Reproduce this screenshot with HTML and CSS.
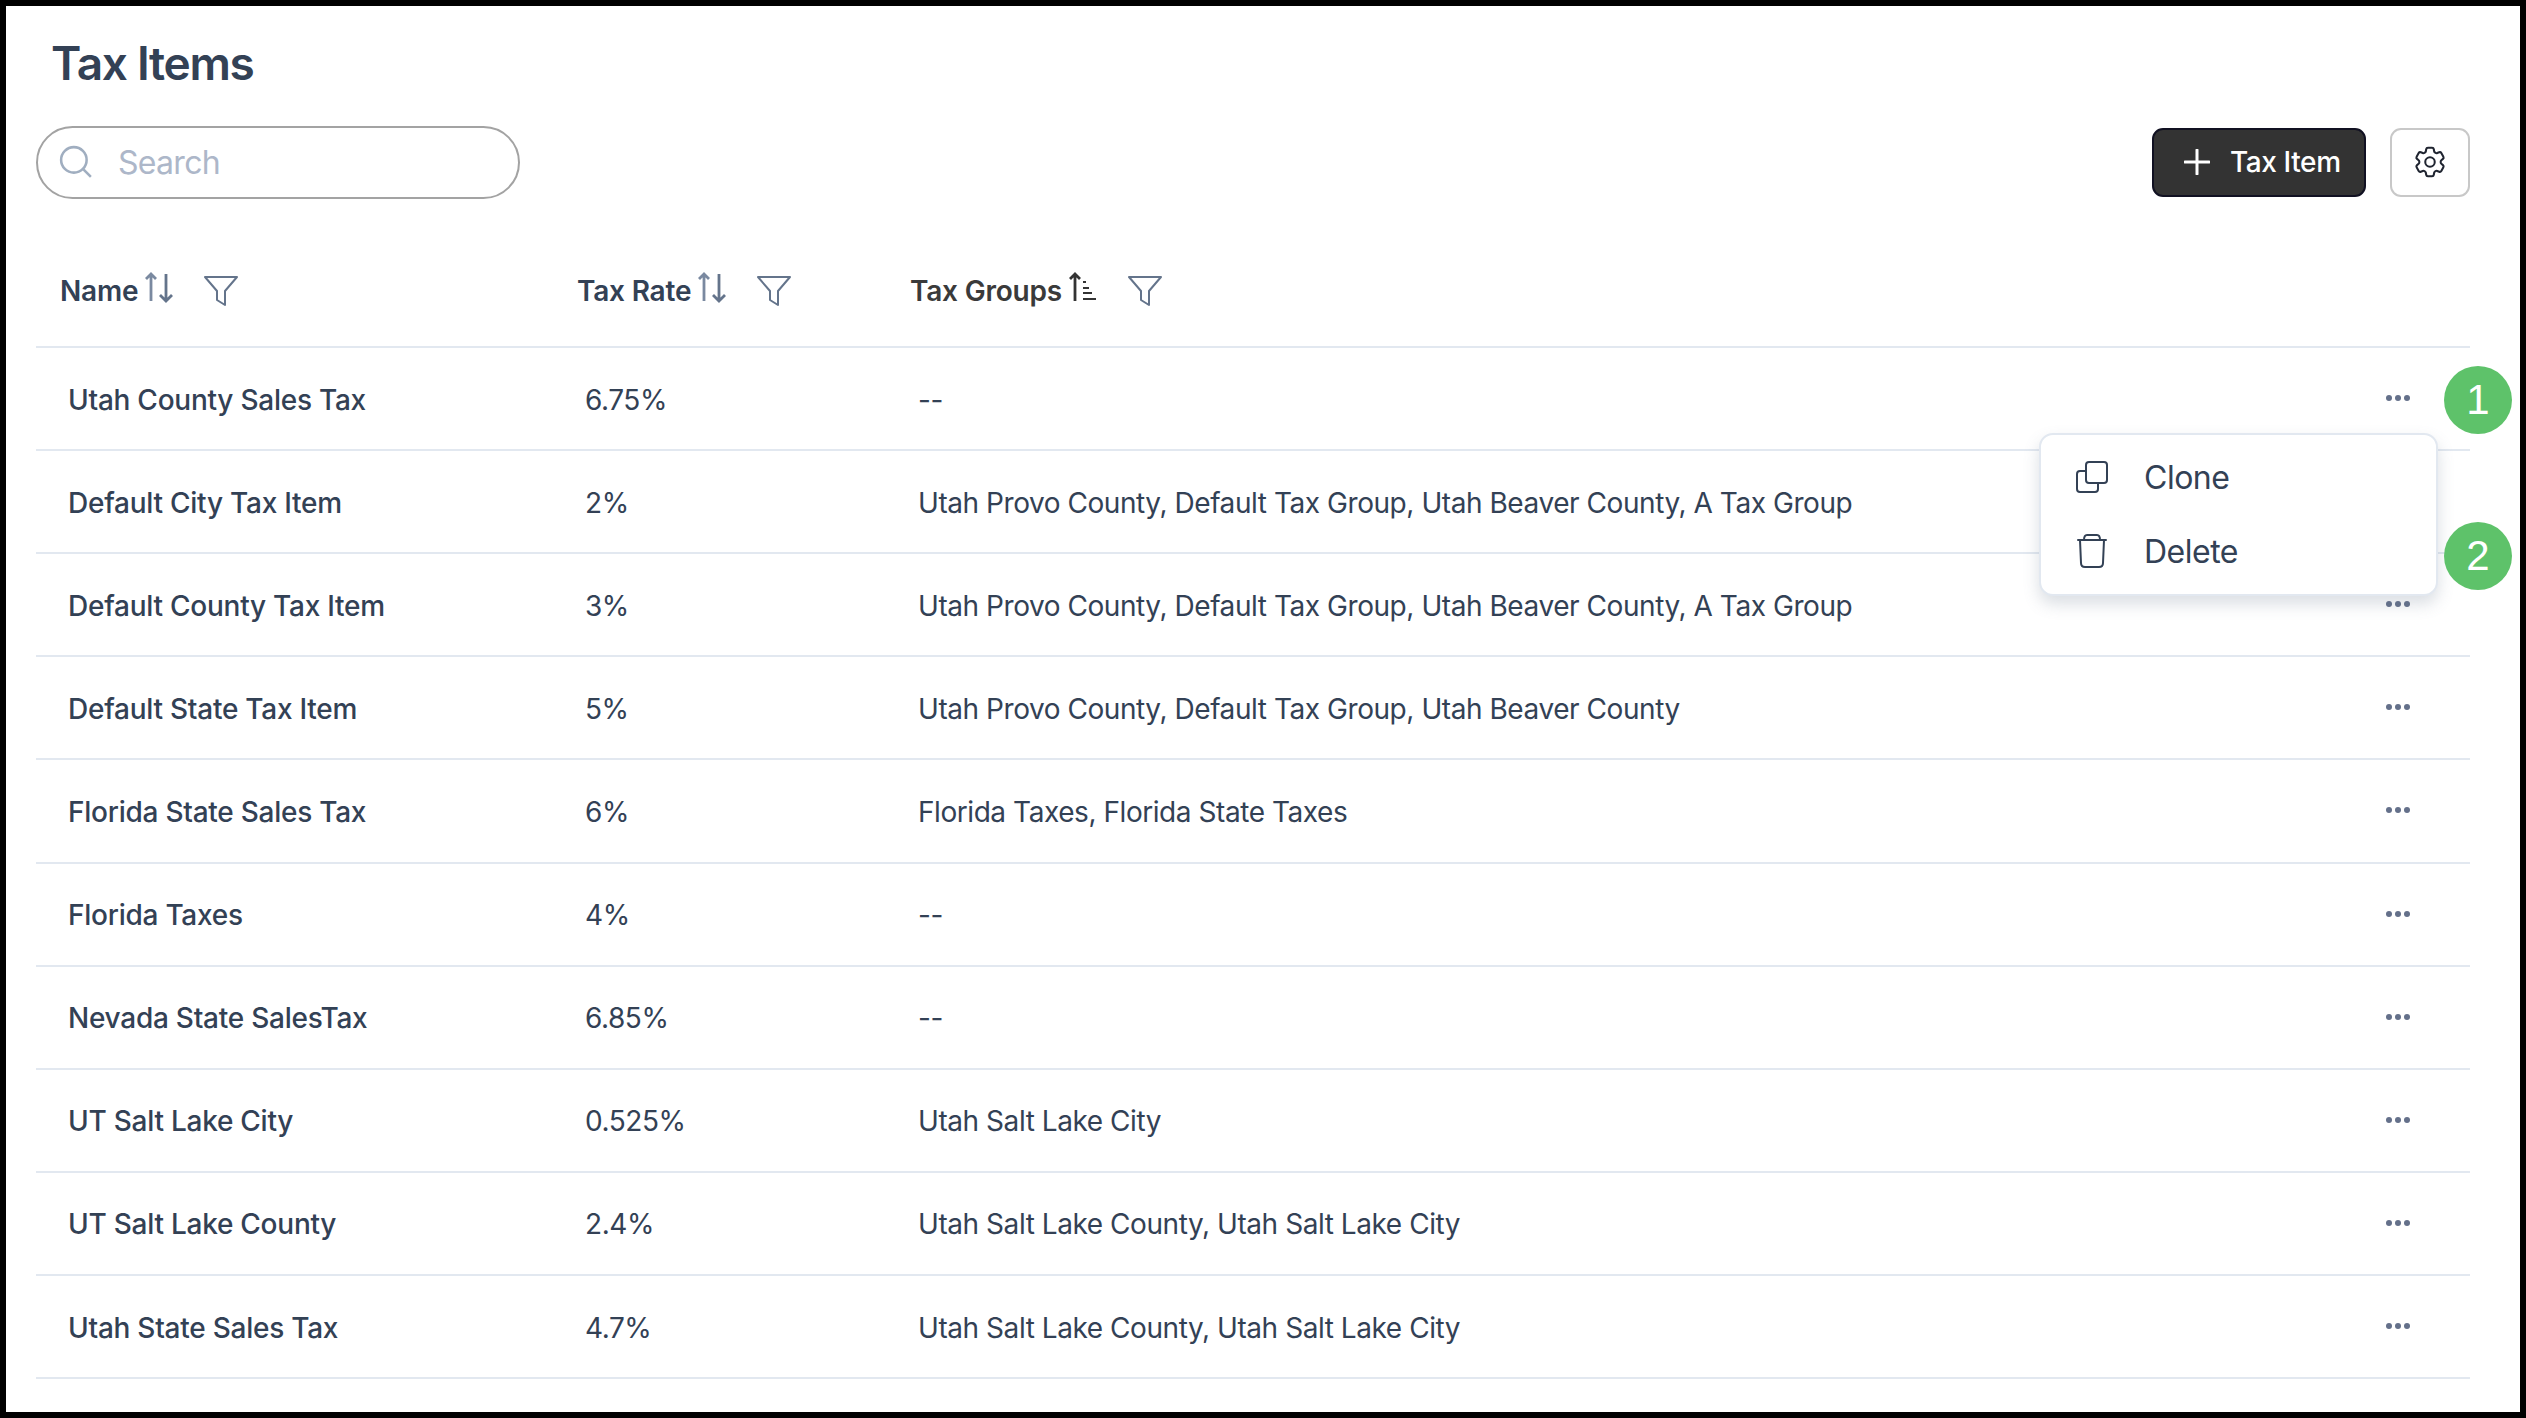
FILE: index.html
```html
<!DOCTYPE html>
<html lang="en">

<head>
    <meta charset="UTF-8">
    <title>Tax Items</title>
    <link rel="stylesheet" href="styles.css">
</head>

<body>
    <svg class="icon-defs" width="0" height="0">
        <symbol id="sort" viewBox="0 0 30 32">
            <path class="sort-up" d="M7 30V3M2 8l5-5 5 5" />
            <path class="sort-down" d="M22 3v27M16 24l6 6 6-6" />
        </symbol>
        <symbol id="funnel" viewBox="0 0 34 30">
            <path d="M1 1h32L21 15v14l-8-5V15z" />
        </symbol>
        <symbol id="dots" viewBox="0 0 24 6">
            <circle cx="3" cy="3" r="3" />
            <circle cx="12" cy="3" r="3" />
            <circle cx="21" cy="3" r="3" />
        </symbol>
    </svg>

    <div class="frame">
        <h1 class="title">Tax Items</h1>

        <div class="toolbar">
            <div class="search">
                <svg class="search-icon" viewBox="0 0 32 32">
                    <circle cx="14" cy="14" r="12" />
                    <path d="M23 23l7 7" />
                </svg>
                <span class="search-text">Search</span>
            </div>
            <div class="actions">
                <button class="btn-primary">
                    <svg class="plus-icon" viewBox="0 0 26 26"><path d="M13 1v24M1 13h24" /></svg>
                    Tax Item
                </button>
                <button class="btn-settings">
                    <svg class="gear-icon" viewBox="0 0 24 24">
                        <path d="M9.594 3.94c.09-.542.56-.94 1.11-.94h2.593c.55 0 1.02.398 1.11.94l.213 1.281c.063.374.313.686.645.87.074.04.147.083.22.127.324.196.72.257 1.075.124l1.217-.456a1.125 1.125 0 011.37.49l1.296 2.247a1.125 1.125 0 01-.26 1.431l-1.003.827c-.293.24-.438.613-.431.992a6.759 6.759 0 010 .255c-.007.378.138.75.43.99l1.005.828c.424.35.534.954.26 1.43l-1.298 2.247a1.125 1.125 0 01-1.369.491l-1.217-.456c-.355-.133-.75-.072-1.076.124a6.57 6.57 0 01-.22.128c-.331.183-.581.495-.644.869l-.213 1.28c-.09.543-.56.941-1.11.941h-2.594c-.55 0-1.02-.398-1.11-.94l-.213-1.281c-.062-.374-.312-.686-.644-.87a6.52 6.52 0 01-.22-.127c-.325-.196-.72-.257-1.076-.124l-1.217.456a1.125 1.125 0 01-1.369-.49l-1.297-2.247a1.125 1.125 0 01.26-1.431l1.004-.827c.292-.24.437-.613.43-.992a6.932 6.932 0 010-.255c.007-.378-.138-.75-.43-.99l-1.004-.828a1.125 1.125 0 01-.26-1.43l1.297-2.247a1.125 1.125 0 011.37-.491l1.216.456c.356.133.751.072 1.076-.124.072-.044.146-.087.22-.128.332-.183.582-.495.644-.869l.214-1.281z" />
                        <circle cx="12" cy="12" r="3" />
                    </svg>
                </button>
            </div>
        </div>

        <table class="tax-table">
            <thead>
                <tr>
                    <th class="col-name"><span class="th-inner">Name <svg class="sort-icon"><use href="#sort" /></svg><svg class="filter-icon"><use href="#funnel" /></svg></span></th>
                    <th class="col-rate"><span class="th-inner">Tax Rate <svg class="sort-icon"><use href="#sort" /></svg><svg class="filter-icon"><use href="#funnel" /></svg></span></th>
                    <th><span class="th-inner sorted">Tax Groups
                        <svg class="sort-icon" viewBox="0 0 30 32">
                            <path class="sort-active" d="M7 30V3M2 8l5-5 5 5" />
                            <path class="sort-bars" d="M15 11h3M15 17h6M15 22h9M15 28h13" />
                        </svg><svg class="filter-icon"><use href="#funnel" /></svg></span></th>
                    <th class="col-more"></th>
                </tr>
            </thead>
            <tbody>
                <tr><td class="name">Utah County Sales Tax</td><td>6.75%</td><td>--</td><td class="more"><svg class="dots"><use href="#dots" /></svg></td></tr>
                <tr><td class="name">Default City Tax Item</td><td>2%</td><td>Utah Provo County, Default Tax Group, Utah Beaver County, A Tax Group</td><td class="more"><svg class="dots"><use href="#dots" /></svg></td></tr>
                <tr><td class="name">Default County Tax Item</td><td>3%</td><td>Utah Provo County, Default Tax Group, Utah Beaver County, A Tax Group</td><td class="more"><svg class="dots"><use href="#dots" /></svg></td></tr>
                <tr><td class="name">Default State Tax Item</td><td>5%</td><td>Utah Provo County, Default Tax Group, Utah Beaver County</td><td class="more"><svg class="dots"><use href="#dots" /></svg></td></tr>
                <tr><td class="name">Florida State Sales Tax</td><td>6%</td><td>Florida Taxes, Florida State Taxes</td><td class="more"><svg class="dots"><use href="#dots" /></svg></td></tr>
                <tr><td class="name">Florida Taxes</td><td>4%</td><td>--</td><td class="more"><svg class="dots"><use href="#dots" /></svg></td></tr>
                <tr><td class="name">Nevada State SalesTax</td><td>6.85%</td><td>--</td><td class="more"><svg class="dots"><use href="#dots" /></svg></td></tr>
                <tr><td class="name">UT Salt Lake City</td><td>0.525%</td><td>Utah Salt Lake City</td><td class="more"><svg class="dots"><use href="#dots" /></svg></td></tr>
                <tr><td class="name">UT Salt Lake County</td><td>2.4%</td><td>Utah Salt Lake County, Utah Salt Lake City</td><td class="more"><svg class="dots"><use href="#dots" /></svg></td></tr>
                <tr><td class="name">Utah State Sales Tax</td><td>4.7%</td><td>Utah Salt Lake County, Utah Salt Lake City</td><td class="more"><svg class="dots"><use href="#dots" /></svg></td></tr>
            </tbody>
        </table>

        <div class="menu">
            <div class="menu-item">
                <svg class="menu-icon" viewBox="0 0 32 34">
                    <rect x="10" y="2" width="21" height="21" rx="3" />
                    <path d="M9 11H4a3 3 0 0 0-3 3v15a3 3 0 0 0 3 3h15a3 3 0 0 0 3-3v-5" />
                </svg>
                Clone
            </div>
            <div class="menu-item">
                <svg class="menu-icon" viewBox="0 0 32 34">
                    <path d="M2 6h28M8 6c0-3 1-5 3-5h10c2 0 3 2 3 5M4 6l1 23c0 2 1 4 4 4h14c3 0 4-2 4-4l1-23" />
                </svg>
                Delete
            </div>
        </div>

        <span class="badge badge-one">1</span>
        <span class="badge badge-two">2</span>
    </div>
</body>

</html>
```

FILE: styles.css
```css
* {
    box-sizing: border-box;
}

body {
    margin: 0;
    background: #fff;
    font-family: Inter, "Liberation Sans", sans-serif;
    color: #334155;
}

.icon-defs {
    position: absolute;
}

.frame {
    position: relative;
    height: 1418px;
    border: 6px solid #000;
    padding: 0 50px 0 30px;
    overflow: hidden;
}

.title {
    margin: 0;
    padding: 33px 0 0 15px;
    height: 120px;
    font-size: 46px;
    line-height: 48px;
    font-weight: 600;
    letter-spacing: -1.3px;
}

.toolbar {
    display: flex;
    justify-content: space-between;
    align-items: center;
    height: 72px;
}

.search {
    display: flex;
    align-items: center;
    width: 484px;
    height: 73px;
    padding-left: 21px;
    border: 2px solid #a3a3a3;
    border-radius: 37px;
}

.search-icon {
    width: 34px;
    height: 34px;
    fill: none;
    stroke: #a0aec0;
    stroke-width: 2.4;
}

.search-text {
    margin-left: 25px;
    font-size: 32px;
    letter-spacing: -0.7px;
    color: #adb7c9;
}

.actions {
    display: flex;
    gap: 24px;
}

.btn-primary {
    display: flex;
    align-items: center;
    gap: 20px;
    width: 214px;
    height: 69px;
    padding: 0 0 0 30px;
    background: #333;
    border: 2px solid #111122;
    border-radius: 11px;
    color: #fff;
    font-family: inherit;
    font-size: 28px;
    font-weight: 500;
    letter-spacing: -0.4px;
}

.plus-icon {
    width: 26px;
    height: 26px;
    fill: none;
    stroke: #fff;
    stroke-width: 3;
    stroke-linecap: round;
}

.btn-settings {
    display: flex;
    align-items: center;
    justify-content: center;
    width: 80px;
    height: 69px;
    padding: 0;
    background: #fff;
    border: 2px solid #c8c8c8;
    border-radius: 11px;
}

.gear-icon {
    width: 38px;
    height: 38px;
    fill: none;
    stroke: #1f2430;
    stroke-width: 1.3;
}

.tax-table {
    width: 100%;
    margin-top: 50px;
    border-collapse: collapse;
    table-layout: fixed;
}

.tax-table th {
    height: 99px;
    padding: 0 24px 12px;
    border-bottom: 2px solid #e2e8f0;
    text-align: left;
    font-size: 28px;
    font-weight: 600;
    letter-spacing: -0.2px;
}

.col-name {
    width: 517px;
}

.col-rate {
    width: 333px;
}

.col-more {
    width: 144px;
}

.th-inner {
    display: flex;
    align-items: center;
    gap: 6px;
}

.sorted {
    color: #3a3a3a;
}

.sort-icon {
    width: 30px;
    height: 32px;
    margin-top: -8px;
    fill: none;
    stroke-width: 2.8;
}

.sort-up {
    stroke: #7a89a0;
}

.sort-down {
    stroke: #64748b;
}

.sort-active {
    stroke: #333;
}

.sort-bars {
    stroke: #333;
    stroke-width: 2;
}

.filter-icon {
    width: 34px;
    height: 30px;
    margin-left: 24px;
    fill: none;
    stroke: #64748b;
    stroke-width: 2;
    stroke-linejoin: round;
}

.tax-table td {
    height: 103.12px;
    padding: 2px 32px 0;
    border-bottom: 2px solid #e2e8f0;
    font-size: 28px;
    letter-spacing: -0.44px;
}

.tax-table td.name {
    font-weight: 500;
    letter-spacing: -0.25px;
}

.tax-table td.more {
    padding: 0 0 1px 0;
    text-align: center;
}

.dots {
    display: block;
    width: 24px;
    height: 6px;
    margin: 0 auto;
    fill: #64708a;
}

.menu {
    position: absolute;
    left: 2033px;
    top: 427px;
    width: 399px;
    height: 163px;
    padding: 5px 0;
    background: #fff;
    border: 2px solid #e2e8f0;
    border-radius: 14px;
    box-shadow: 0 8px 16px rgba(100, 116, 139, 0.24);
}

.menu-item {
    display: flex;
    align-items: center;
    gap: 36px;
    height: 74px;
    padding-left: 35px;
    font-size: 32px;
    letter-spacing: -0.5px;
}

.menu-icon {
    width: 32px;
    height: 34px;
    fill: none;
    stroke: #334155;
    stroke-width: 2;
    stroke-linecap: round;
}

.badge {
    position: absolute;
    left: 2438px;
    display: flex;
    align-items: center;
    justify-content: center;
    width: 68px;
    height: 68px;
    border-radius: 50%;
    background: #5ec26a;
    color: #fff;
    font-family: "Liberation Sans", sans-serif;
    font-size: 42px;
}

.badge-one {
    top: 360px;
}

.badge-two {
    top: 516px;
}
```
